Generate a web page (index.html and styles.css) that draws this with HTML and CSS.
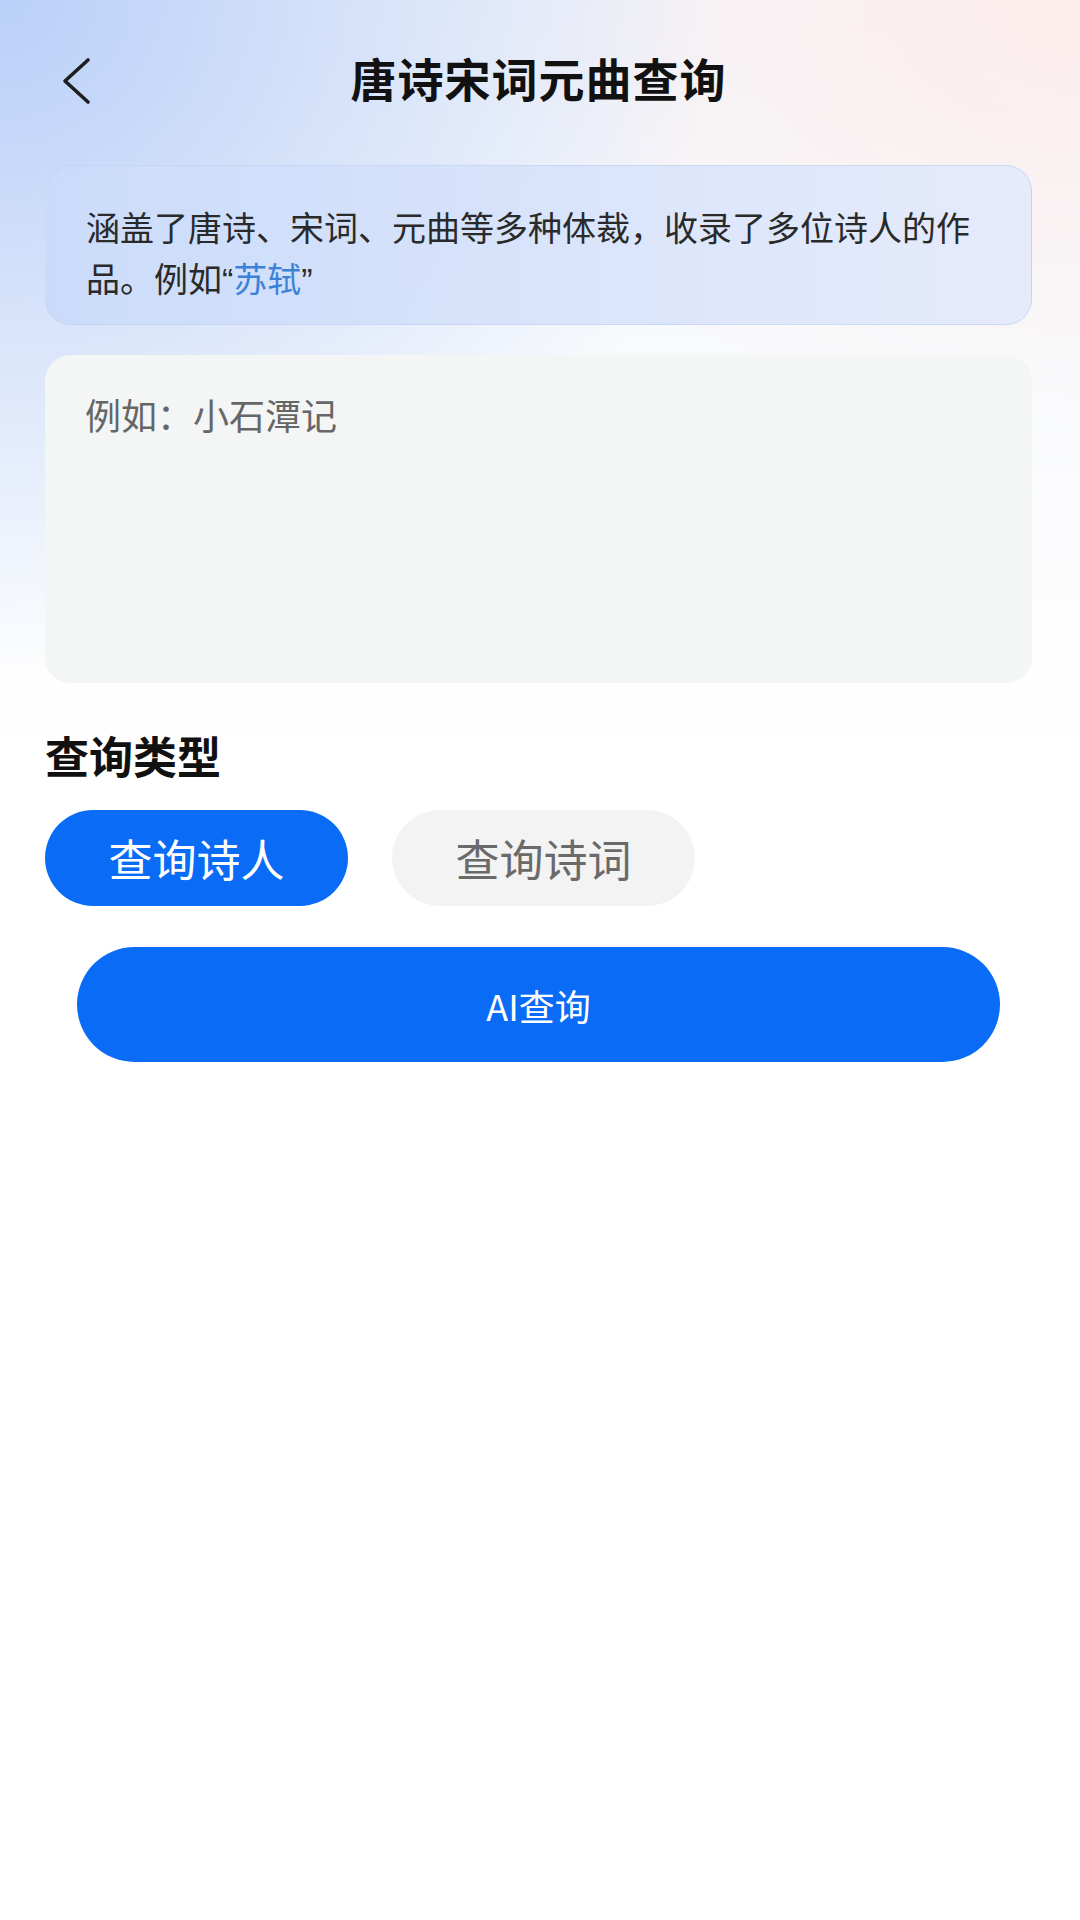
FILE: index.html
```html
<!DOCTYPE html>
<html lang="zh-CN">

<head>
    <meta charset="UTF-8">
    <meta name="viewport" content="width=device-width, initial-scale=1.0">
    <title>唐诗宋词元曲查询</title>
    <link rel="stylesheet" href="styles.css">
</head>

<body>
    <div class="page">
        <div class="header">
            <div class="back">
                <svg width="32" height="48" viewBox="0 0 32 48">
                    <polyline points="27,3 4,24 27,45" fill="none" stroke="#1e1e1e" stroke-width="3.6"
                        stroke-linecap="round" stroke-linejoin="round" />
                </svg>
            </div>
            <h1>唐诗宋词元曲查询</h1>
            <div></div>
        </div>

        <div class="intro">
            涵盖了唐诗、宋词、元曲等多种体裁，收录了多位诗人的作品。例如<span class="quote">“<span class="highlight">苏轼</span>”</span>
        </div>

        <textarea class="query-input" placeholder="例如：小石潭记"></textarea>

        <h2 class="section-title">查询类型</h2>
        <div class="type-options">
            <div class="type-pill active">查询诗人</div>
            <div class="type-pill">查询诗词</div>
        </div>

        <div class="submit">AI查询</div>
    </div>
</body>

</html>
```

FILE: styles.css
```css
body {
    margin: 0;
    font-family: "Noto Sans CJK SC", "Noto Sans", sans-serif;
    color: #222;
    background-color: white;
}

.page {
    width: 1080px;
    min-height: 1920px;
    box-sizing: border-box;
    padding: 18px 48px 0 45px;
    background:
        radial-gradient(ellipse 720px 680px at 0 0, rgba(182, 206, 248, 0.95), rgba(182, 206, 248, 0) 100%),
        radial-gradient(ellipse 620px 420px at 100% 0, rgba(253, 236, 234, 0.95), rgba(253, 236, 234, 0) 100%),
        linear-gradient(180deg, #f3f5fa 0, #ffffff 760px);
}

.header {
    display: grid;
    grid-template-columns: 1fr auto 1fr;
    align-items: center;
    height: 130px;
}

.back {
    padding-left: 16px;
    display: flex;
    align-items: center;
    margin-top: -4px;
}

.header h1 {
    margin: -12px 0 0;
    font-size: 46px;
    font-weight: bold;
    color: #111;
    letter-spacing: 1px;
}

.intro {
    margin-top: 17px;
    height: 160px;
    box-sizing: border-box;
    padding: 35px 40px 0;
    border-radius: 26px;
    border: 1px solid rgba(190, 206, 238, 0.6);
    background: linear-gradient(90deg, rgba(202, 219, 250, 0.95), rgba(228, 234, 251, 0.95));
    font-size: 34px;
    line-height: 51px;
    color: #2a2a2a;
}

.quote {
    font-family: "Liberation Sans", "Noto Sans CJK SC", sans-serif;
    line-height: 0;
}

.highlight {
    font-family: "Noto Sans CJK SC", sans-serif;
    color: #3a82d8;
}

.query-input {
    display: block;
    width: 100%;
    height: 328px;
    margin-top: 30px;
    box-sizing: border-box;
    padding: 34px 40px;
    border: none;
    border-radius: 26px;
    outline: none;
    resize: none;
    background-color: #f4f5f5;
    font-family: "Noto Sans CJK SC", "Noto Sans", sans-serif;
    font-size: 36px;
    line-height: 50px;
    color: #333;
}

.query-input::placeholder {
    color: #666;
}

.section-title {
    margin: 46px 0 0;
    font-size: 44px;
    line-height: 53px;
    font-weight: bold;
    color: #111;
}

.type-options {
    display: flex;
    gap: 44px;
    margin-top: 28px;
}

.type-pill {
    width: 303px;
    height: 96px;
    border-radius: 48px;
    display: flex;
    align-items: center;
    justify-content: center;
    font-size: 44px;
    background-color: #f3f3f3;
    color: #6a6a6a;
}

.type-pill.active {
    background-color: #0a6cf6;
    color: white;
}

.submit {
    margin: 41px 32px 0;
    height: 115px;
    border-radius: 58px;
    background-color: #0a6cf6;
    color: white;
    font-size: 36px;
    display: flex;
    align-items: center;
    justify-content: center;
}
```
